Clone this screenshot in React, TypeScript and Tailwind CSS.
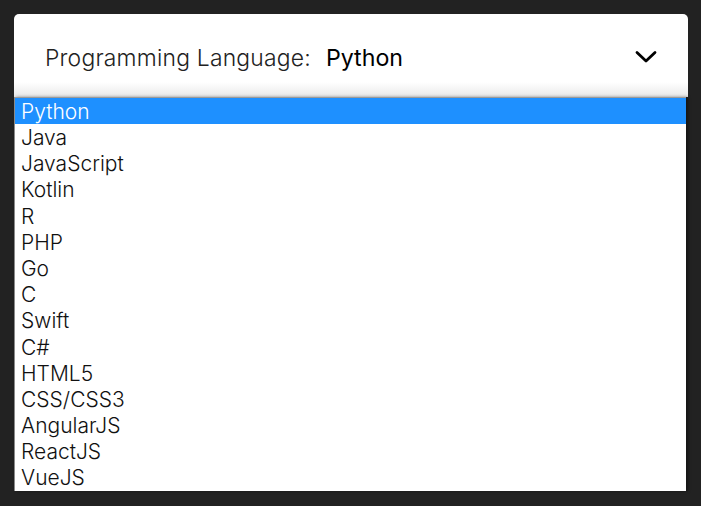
import React from "react";

const languages = [
  "Python",
  "Java",
  "JavaScript",
  "Kotlin",
  "R",
  "PHP",
  "Go",
  "C",
  "Swift",
  "C#",
  "HTML5",
  "CSS/CSS3",
  "AngularJS",
  "ReactJS",
  "VueJS",
];

function Chevron() {
  return (
    <svg width="24" height="24" viewBox="0 0 24 24" fill="none">
      <path
        d="M3 7.5l9 8.5 9-8.5"
        stroke="#000"
        strokeWidth="2.8"
        strokeLinecap="round"
        strokeLinejoin="round"
      />
    </svg>
  );
}

export default function App() {
  const selected = "Python";
  return (
    <div className="w-[701px] h-[506px] bg-[#222222] px-[14px] pt-[14px] font-['Inter',sans-serif]">
      <div className="flex flex-col w-[674px]">
        <div className="h-[83px] rounded-t-[5px] bg-gradient-to-b from-white from-[82%] to-[#e9e9e9] flex items-center pl-[31px] pr-[30px] pt-[3px]">
          <span className="text-[22.9px] font-light text-[#222] tracking-[0.2px] translate-y-[1px]">
            Programming Language:
          </span>
          <span className="ml-[15px] text-[23.2px] font-normal text-black translate-y-[1px]">
            {selected}
          </span>
          <span className="ml-auto flex">
            <Chevron />
          </span>
        </div>
        <div className="w-[672px] bg-white border-l border-[#8a8a8a] border-t border-t-[#9a9a9a] shadow-[2px_0_3px_rgba(0,0,0,0.4)]">
          {languages.map((lang) => (
            <div
              key={lang}
              className={
                lang === selected
                  ? "h-[26.2px] flex items-center pl-[6px] pt-[1px] text-[21px] font-light text-white bg-[#1e90ff]"
                  : "h-[26.2px] flex items-center pl-[6px] pt-[1px] text-[21px] font-light text-[#111]"
              }
            >
              {lang}
            </div>
          ))}
        </div>
      </div>
    </div>
  );
}
